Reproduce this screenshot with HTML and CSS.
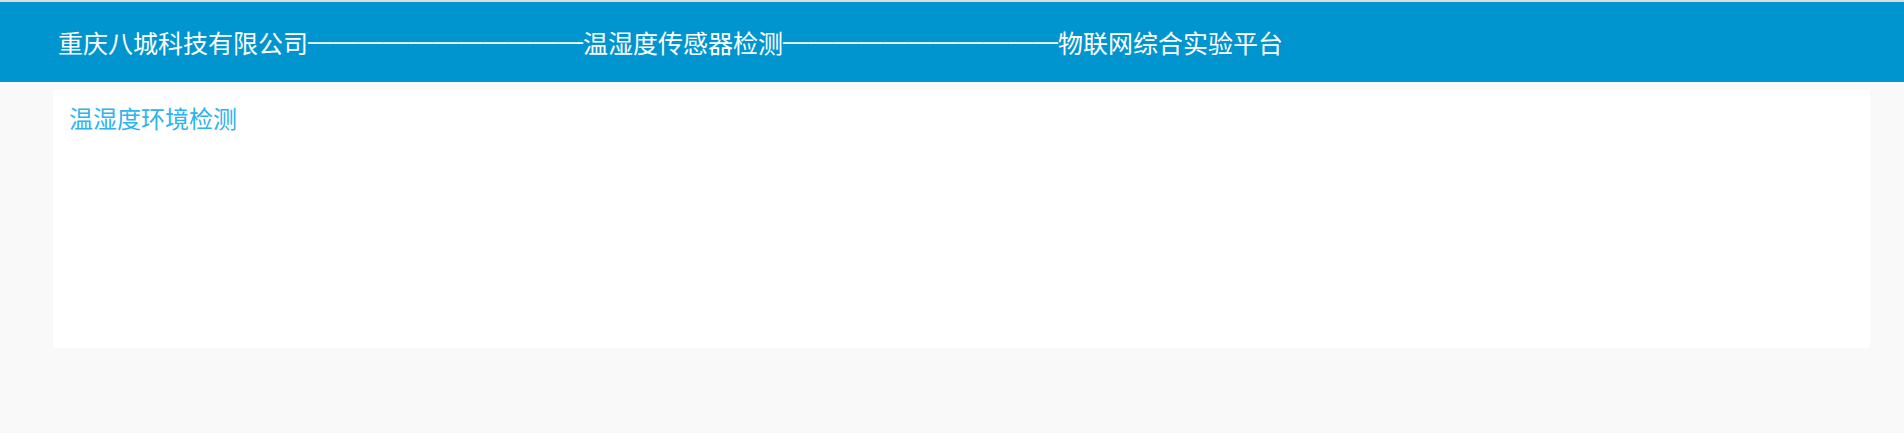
FILE: index.html
```html
<!DOCTYPE html>
<html lang="zh-CN">
<head>
<meta charset="utf-8">
<title>温湿度传感器检测</title>
<link rel="stylesheet" href="styles.css">
</head>
<body>
<header class="topbar">
  <h1 class="topbar-title"><span>重庆八城科技有限公司</span><span class="dash">———————————</span><span>温湿度传感器检测</span><span class="dash">———————————</span><span>物联网综合实验平台</span></h1>
</header>
<main class="content">
  <section class="panel">
    <h2 class="panel-title">温湿度环境检测</h2>
  </section>
</main>
</body>
</html>
```
FILE: styles.css
```css
html, body {
  margin: 0;
  padding: 0;
}
body {
  background: #f9f9f9;
  font-family: "Noto Sans CJK SC", "Noto Sans", sans-serif;
  border-top: 2px solid #dcdcdc;
}
.topbar {
  background: #0095cf;
  height: 80px;
  display: flex;
  align-items: center;
  padding-left: 58px;
}
.topbar-title {
  margin: 0;
  font-size: 25px;
  font-weight: normal;
  color: #ffffff;
  line-height: 30px;
  white-space: nowrap;
}
.dash {
  font-family: "Liberation Sans", sans-serif;
  display: inline-block;
  vertical-align: top;
  line-height: 30px;
  position: relative;
  top: -1px;
}
.content {
  padding: 8px 34px 0 53px;
}
.panel {
  background: #ffffff;
  height: 258px;
  padding: 10px 16px 0;
  box-sizing: border-box;
}
.panel-title {
  margin: 0;
  font-size: 24px;
  font-weight: normal;
  line-height: 36px;
  color: #2cb3f0;
}
```
